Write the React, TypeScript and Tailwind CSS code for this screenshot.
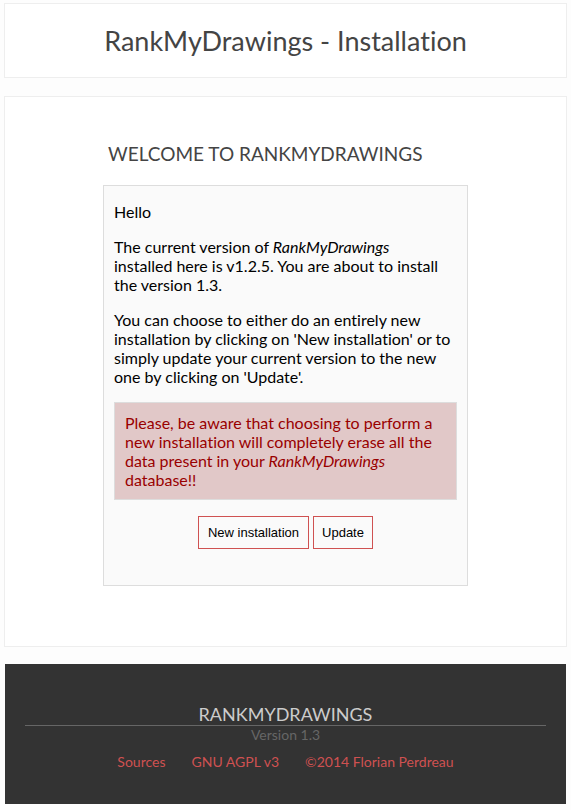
export default function App() {
  return (
    <div className="min-h-screen bg-[#fdfdfd] px-1 pt-[3px] pb-1.5 font-[Lato,sans-serif] text-base leading-[19px] text-black [font-variant-ligatures:none]">
      <header className="border border-[#eeeeee] bg-white pt-[21px] pb-5 text-center">
        <h1 className="text-[27px] leading-[32px] text-[#444444]">RankMyDrawings - Installation</h1>
      </header>

      <main className="mt-[18px] border border-[#eeeeee] bg-white px-[98px] pt-[45px] pb-[60px]">
        <h2 className="px-[5px] text-[19px] leading-[24px] text-[#444444] uppercase">Welcome to RankMyDrawings</h2>
        <section className="mt-[19px] border border-[#dddddd] bg-[#fafafa] px-2.5 pt-4 pb-9">
          <p>Hello</p>
          <p className="mt-4">
            The current version of <em>RankMyDrawings</em>
            <br />
            installed here is v1.2.5. You are about to install the version 1.3.
          </p>
          <p className="mt-4">
            You can choose to either do an entirely new installation by clicking on 'New installation' or to simply update your current version to the new one by clicking on 'Update'.
          </p>
          <p className="mt-4 border border-[#dddddd] bg-[#e1c8c8] p-2.5 text-[#990000]">
            Please, be aware that choosing to perform a new installation will completely erase all the data present in your <em>RankMyDrawings</em> database!!
          </p>
          <div className="mt-4 flex justify-center gap-1 font-['Liberation_Sans',Arial,sans-serif] text-[13px] leading-[15px]">
            <button type="button" className="w-[111px] border border-[#cf5151] py-2">New installation</button>
            <button type="button" className="w-[60px] border border-[#cf5151] py-2">Update</button>
          </div>
        </section>
      </main>

      <footer className="mx-px mt-[17px] bg-[#333333] px-5 pt-10 pb-[33px] text-center">
        <div className="border-b border-[#666666] text-[18px] leading-[21px] text-[#cccccc] uppercase">RankMyDrawings</div>
        <div className="text-[14px] leading-[18px] text-[#666666]">Version 1.3</div>
        <nav className="mt-[9px] flex justify-center gap-[26px] text-[14px] leading-[18px] text-[#cf5151]">
          <a href="#sources">Sources</a>
          <a href="#license">GNU AGPL v3</a>
          <a href="#author">©2014 Florian Perdreau</a>
        </nav>
      </footer>
    </div>
  );
}
